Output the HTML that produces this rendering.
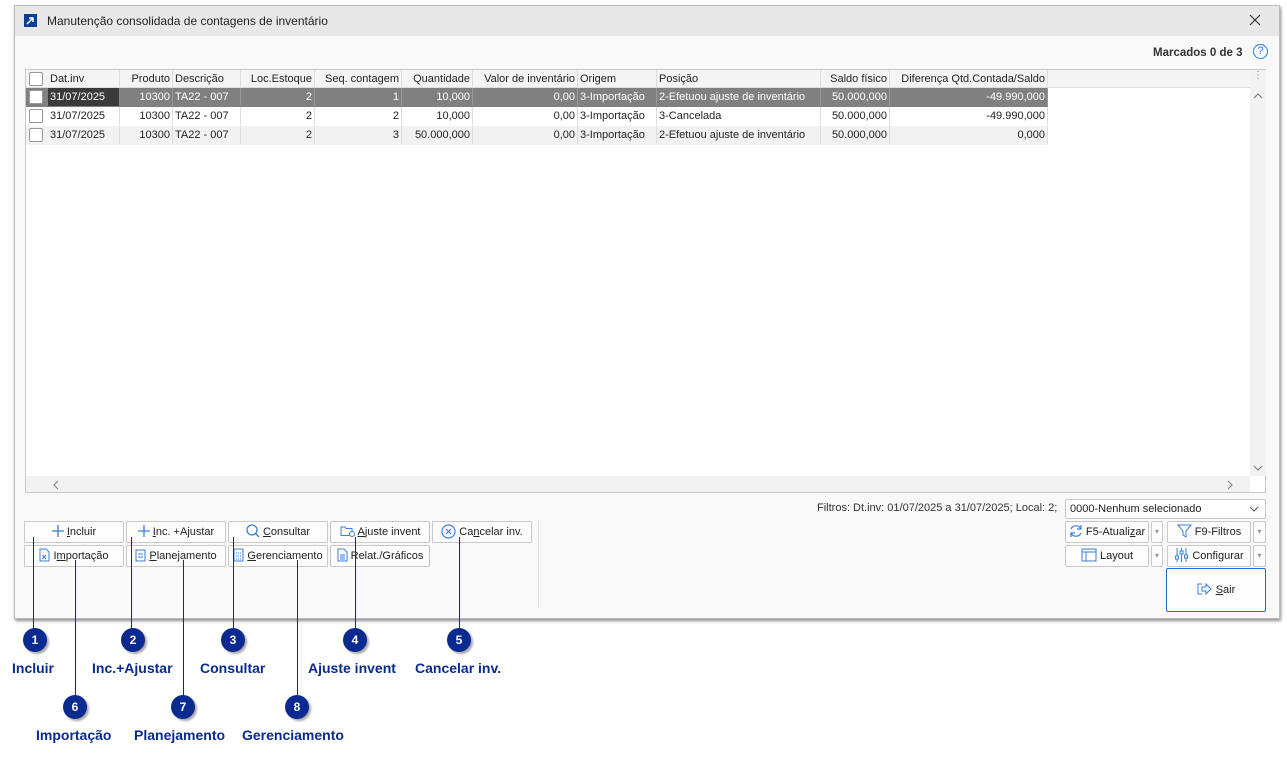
<!DOCTYPE html>
<html><head><meta charset="utf-8"><style>
*{box-sizing:border-box;margin:0;padding:0}
body{width:1287px;height:762px;background:#fff;position:relative;overflow:hidden;font-family:"Liberation Sans",sans-serif;font-size:11px;color:#222}
.a{position:absolute}
.win{left:14px;top:5px;width:1266px;height:614px;background:#f9f9f9;border:1px solid #bbb;box-shadow:1px 2px 3px rgba(0,0,0,.45)}
.title{left:0;top:0;width:100%;height:30px;background:#e8e8e8;font-size:12px;color:#222}
.grid{left:25px;top:69px;width:1241px;height:424px;background:#fff;border:1px solid #c8c8c8}
.hdr{top:0;height:18px;background:#f4f4f4;border-bottom:1px solid #ddd}
.c{position:absolute;height:18px;line-height:18px;padding:0 2px;white-space:nowrap;overflow:hidden;border-right:1px solid #ddd}
.r{text-align:right}
.row{position:absolute;left:0;width:1022px;height:19px}
.cb{position:absolute;left:3px;top:2px;width:14px;height:14px;border:1px solid #999;background:#fff;border-radius:2px}
.btn{position:absolute;height:22px;border:1px solid #c8c8c8;background:#fdfdfd;border-radius:2px;text-align:center;line-height:20px;font-size:11px;color:#222}
.btn svg{vertical-align:middle;margin-right:3px;margin-top:-2px}
.dot{position:absolute;width:24px;height:24px;border-radius:50%;background:#0a2a8f;color:#fff;font-weight:bold;font-size:12px;text-align:center;line-height:24px;box-shadow:2px 2px 2px rgba(0,0,0,.35)}
.lbl{position:absolute;color:#0a2a8f;font-weight:bold;font-size:14px;white-space:nowrap}
.ln{position:absolute;width:1px;background:#0a2a8f}
</style></head><body>
<div class="a win">
 <div class="a title">
  <div class="a" style="left:9px;top:8px;width:13px;height:13px;background:#0b3f94"><svg width="13" height="13"><path d="M3 10L9 4M5 4h4v4" stroke="#fff" stroke-width="1.5" fill="none"/></svg></div>
  <div class="a" style="left:32px;top:8px">Manutenção consolidada de contagens de inventário</div>
  <svg class="a" style="left:1234px;top:8px" width="12" height="12"><path d="M1 1L11 11M11 1L1 11" stroke="#333" stroke-width="1.2"/></svg>
 </div>
 <div class="a" style="left:1138px;top:41px;font-weight:bold;font-size:11.5px;color:#333">Marcados 0 de 3</div>
 <div class="a" style="left:1238px;top:38px;width:15px;height:15px;border:1px solid #2a7ad8;border-radius:50%;color:#2a7ad8;font-size:11px;text-align:center;line-height:13px">?</div>
</div>
<div class="a grid">
 <div class="a hdr" style="left:0;width:1224px">
  <div class="cb"></div>
  <div class="c" style="left:22px;width:72px">Dat.inv</div>
  <div class="c r" style="left:94px;width:53px">Produto</div>
  <div class="c" style="left:147px;width:68px">Descrição</div>
  <div class="c r" style="left:215px;width:74px">Loc.Estoque</div>
  <div class="c r" style="left:289px;width:87px">Seq. contagem</div>
  <div class="c r" style="left:376px;width:71px">Quantidade</div>
  <div class="c r" style="left:447px;width:105px">Valor de inventário</div>
  <div class="c" style="left:552px;width:79px">Origem</div>
  <div class="c" style="left:631px;width:164px">Posição</div>
  <div class="c r" style="left:795px;width:69px">Saldo físico</div>
  <div class="c r" style="left:864px;width:158px">Diferença Qtd.Contada/Saldo</div>
 </div>
 <div class="row" style="top:18px;background:#808080;color:#fff"><div class="cb"></div>
  <div class="c" style="left:22px;width:72px;background:#3a3a3a;border-color:#888">31/07/2025</div><div class="c r" style="left:94px;width:53px;border-color:#999">10300</div><div class="c" style="left:147px;width:68px;border-color:#999">TA22 - 007</div><div class="c r" style="left:215px;width:74px;border-color:#999">2</div><div class="c r" style="left:289px;width:87px;border-color:#999">1</div><div class="c r" style="left:376px;width:71px;border-color:#999">10,000</div><div class="c r" style="left:447px;width:105px;border-color:#999">0,00</div><div class="c" style="left:552px;width:79px;border-color:#999">3-Importação</div><div class="c" style="left:631px;width:164px;border-color:#999">2-Efetuou ajuste de inventário</div><div class="c r" style="left:795px;width:69px;border-color:#999">50.000,000</div><div class="c r" style="left:864px;width:158px;border-color:#999">-49.990,000</div></div>
 <div class="row" style="top:37px;background:#fff"><div class="cb"></div>
  <div class="c" style="left:22px;width:72px">31/07/2025</div><div class="c r" style="left:94px;width:53px">10300</div><div class="c" style="left:147px;width:68px">TA22 - 007</div><div class="c r" style="left:215px;width:74px">2</div><div class="c r" style="left:289px;width:87px">2</div><div class="c r" style="left:376px;width:71px">10,000</div><div class="c r" style="left:447px;width:105px">0,00</div><div class="c" style="left:552px;width:79px">3-Importação</div><div class="c" style="left:631px;width:164px">3-Cancelada</div><div class="c r" style="left:795px;width:69px">50.000,000</div><div class="c r" style="left:864px;width:158px">-49.990,000</div></div>
 <div class="row" style="top:56px;background:#f2f2f2"><div class="cb"></div>
  <div class="c" style="left:22px;width:72px">31/07/2025</div><div class="c r" style="left:94px;width:53px">10300</div><div class="c" style="left:147px;width:68px">TA22 - 007</div><div class="c r" style="left:215px;width:74px">2</div><div class="c r" style="left:289px;width:87px">3</div><div class="c r" style="left:376px;width:71px">50.000,000</div><div class="c r" style="left:447px;width:105px">0,00</div><div class="c" style="left:552px;width:79px">3-Importação</div><div class="c" style="left:631px;width:164px">2-Efetuou ajuste de inventário</div><div class="c r" style="left:795px;width:69px">50.000,000</div><div class="c r" style="left:864px;width:158px">0,000</div></div>
 <div class="a" style="left:1224px;top:0;width:16px;height:406px;background:#f2f2f2;color:#888;text-align:center;font-size:10px">⋮</div>
 <svg class="a" style="left:1227px;top:22px" width="10" height="8"><path d="M1 6L5 2L9 6" stroke="#777" fill="none"/></svg>
 <svg class="a" style="left:1227px;top:394px" width="10" height="8"><path d="M1 2L5 6L9 2" stroke="#777" fill="none"/></svg>
 <div class="a" style="left:0;top:406px;width:1224px;height:16px;background:#f2f2f2"></div>
 <svg class="a" style="left:26px;top:410px" width="8" height="10"><path d="M6 1L2 5L6 9" stroke="#777" fill="none"/></svg>
 <svg class="a" style="left:1200px;top:410px" width="8" height="10"><path d="M2 1L6 5L2 9" stroke="#777" fill="none"/></svg>
</div>
<div class="a" style="left:817px;top:502px;font-size:11px;color:#333">Filtros: Dt.inv: 01/07/2025 a 31/07/2025; Local: 2;</div>
<div class="a" style="left:1065px;top:499px;width:201px;height:20px;border:1px solid #c8c8c8;background:#fff;border-radius:2px;padding:3px 4px;font-size:11px">0000-Nenhum selecionado<svg style="position:absolute;right:6px;top:6px" width="10" height="6"><path d="M1 1L5 5L9 1" stroke="#555" fill="none"/></svg></div>
<div class="a" style="left:538px;top:520px;width:1px;height:88px;background:#ddd"></div>

<div class="btn" style="left:24px;top:521px;width:100px"><svg width="12" height="12"><path d="M6 0v12M0 6h12" stroke="#3b7fd8" stroke-width="1.3"/></svg><u>I</u>ncluir</div>
<div class="btn" style="left:126px;top:521px;width:100px"><svg width="12" height="12"><path d="M6 0v12M0 6h12" stroke="#3b7fd8" stroke-width="1.3"/></svg><u>I</u>nc. +Ajustar</div>
<div class="btn" style="left:228px;top:521px;width:100px"><svg width="14" height="14"><circle cx="6" cy="6" r="5" stroke="#3b7fd8" fill="none" stroke-width="1.3"/><path d="M9.5 9.5L13 13" stroke="#3b7fd8" stroke-width="1.3"/></svg><u>C</u>onsultar</div>
<div class="btn" style="left:330px;top:521px;width:100px"><svg width="15" height="12"><path d="M1 2h4l1 1.5h6v7H1z" stroke="#3b7fd8" fill="none"/><circle cx="12" cy="9" r="2.5" fill="#fff" stroke="#3b7fd8"/></svg><u>A</u>juste invent</div>
<div class="btn" style="left:432px;top:521px;width:100px"><svg width="15" height="15"><circle cx="7.5" cy="7.5" r="6.5" stroke="#3b7fd8" fill="none" stroke-width="1.2"/><path d="M5 5L10 10M10 5L5 10" stroke="#3b7fd8" stroke-width="1.2"/></svg>Ca<u>n</u>celar inv.</div>
<div class="btn" style="left:24px;top:545px;width:100px"><svg width="11" height="14"><path d="M1 1h6l3 3v9H1z" stroke="#3b7fd8" fill="none"/><path d="M3.5 7L7 11M7 7L3.5 11" stroke="#3b7fd8"/></svg>I<u>m</u>portação</div>
<div class="btn" style="left:126px;top:545px;width:100px"><svg width="11" height="14"><rect x="1" y="2" width="9" height="11" stroke="#3b7fd8" fill="none"/><path d="M3 6h5M3 9h5" stroke="#3b7fd8"/></svg><u>P</u>lanejamento</div>
<div class="btn" style="left:228px;top:545px;width:100px"><svg width="11" height="14"><rect x="1" y="1" width="9" height="12" stroke="#3b7fd8" fill="none"/><path d="M3 5h5M3 8h5M3 11h5" stroke="#3b7fd8" stroke-dasharray="1 1"/></svg><u>G</u>erenciamento</div>
<div class="btn" style="left:330px;top:545px;width:100px"><svg width="11" height="14"><path d="M1 1h6l3 3v9H1z" stroke="#3b7fd8" fill="none"/><path d="M3 7h5M3 9h5M3 11h5" stroke="#3b7fd8"/></svg>Relat./Gráficos</div>

<div class="btn" style="left:1065px;top:521px;width:84px"><svg width="14" height="14"><path d="M12 5A5.5 5.5 0 0 0 2 5M2 9A5.5 5.5 0 0 0 12 9M12 1v4h-4M2 13V9h4" stroke="#3b7fd8" fill="none" stroke-width="1.2"/></svg>F5-Atuali<u>z</u>ar</div>
<div class="btn" style="left:1151px;top:521px;width:12px;color:#999;font-size:8px">▾</div>
<div class="btn" style="left:1167px;top:521px;width:84px"><svg width="15" height="14"><path d="M1 1h13L9 7v6L6 11V7z" stroke="#3b7fd8" fill="none"/></svg>F9-Filtros</div>
<div class="btn" style="left:1253px;top:521px;width:13px;color:#999;font-size:8px">▾</div>
<div class="btn" style="left:1065px;top:545px;width:84px"><svg width="16" height="14"><rect x="1" y="1" width="14" height="12" stroke="#3b7fd8" fill="none"/><path d="M1 4h14M5 4v9" stroke="#3b7fd8"/></svg>Layout</div>
<div class="btn" style="left:1151px;top:545px;width:12px;color:#999;font-size:8px">▾</div>
<div class="btn" style="left:1167px;top:545px;width:84px"><svg width="15" height="14"><path d="M3 0v14M7.5 0v14M12 0v14" stroke="#3b7fd8"/><rect x="1.5" y="8" width="3" height="3" fill="#fff" stroke="#3b7fd8"/><rect x="6" y="3" width="3" height="3" fill="#fff" stroke="#3b7fd8"/><rect x="10.5" y="7" width="3" height="3" fill="#fff" stroke="#3b7fd8"/></svg>Configurar</div>
<div class="btn" style="left:1253px;top:545px;width:13px;color:#999;font-size:8px">▾</div>
<div class="btn" style="left:1166px;top:568px;width:100px;height:44px;line-height:42px;border-color:#2a6ac8"><svg width="16" height="14"><path d="M5 2H1v10h4" stroke="#3b7fd8" fill="none"/><path d="M5 5h4V2l5 5-5 5V9H5z" stroke="#3b7fd8" fill="none"/></svg><u>S</u>air</div>

<div class="ln" style="left:33px;top:537px;height:93px"></div>
<div class="ln" style="left:131px;top:537px;height:93px"></div>
<div class="ln" style="left:233px;top:537px;height:93px"></div>
<div class="ln" style="left:355px;top:537px;height:93px"></div>
<div class="ln" style="left:459px;top:537px;height:93px"></div>
<div class="ln" style="left:75px;top:560px;height:137px"></div>
<div class="ln" style="left:183px;top:560px;height:137px"></div>
<div class="ln" style="left:297px;top:560px;height:137px"></div>

<div class="dot" style="left:23px;top:628px">1</div>
<div class="dot" style="left:121px;top:628px">2</div>
<div class="dot" style="left:221px;top:628px">3</div>
<div class="dot" style="left:343px;top:628px">4</div>
<div class="dot" style="left:447px;top:628px">5</div>
<div class="dot" style="left:63px;top:695px">6</div>
<div class="dot" style="left:171px;top:695px">7</div>
<div class="dot" style="left:285px;top:695px">8</div>
<div class="lbl" style="left:12px;top:660px">Incluir</div>
<div class="lbl" style="left:92px;top:660px">Inc.+Ajustar</div>
<div class="lbl" style="left:200px;top:660px">Consultar</div>
<div class="lbl" style="left:308px;top:660px">Ajuste invent</div>
<div class="lbl" style="left:415px;top:660px">Cancelar inv.</div>
<div class="lbl" style="left:36px;top:727px">Importação</div>
<div class="lbl" style="left:134px;top:727px">Planejamento</div>
<div class="lbl" style="left:242px;top:727px">Gerenciamento</div>
</body></html>
